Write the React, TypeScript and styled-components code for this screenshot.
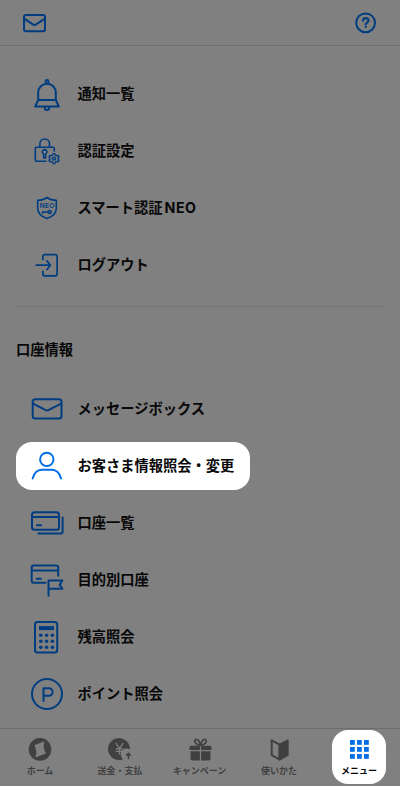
import React from "react";
import styled, { createGlobalStyle } from "styled-components";

const GlobalStyle = createGlobalStyle`
  * { box-sizing: border-box; }
  body { margin: 0; background: #808080; font-family: Inter, "Noto Sans CJK JP", sans-serif; color: #080808; }
  svg { display: block; flex: none; fill: none; stroke: currentColor; stroke-width: 2; stroke-linecap: round; stroke-linejoin: round; }
`;
const Screen = styled.div`
  width: 400px; height: 786px; display: flex; flex-direction: column; background: #808080; overflow: hidden;
`;
const Header = styled.header`
  height: 46px; flex: none; display: flex; align-items: flex-start; justify-content: space-between;
  padding: 12px 23px 0; border-bottom: 1px solid #6d6d6d; color: #003c80;
`;
const Main = styled.main`
  flex: 1; padding: 19.5px 16px 0; min-height: 0;
`;
const List = styled.ul`
  list-style: none; margin: 0; padding: 0;
`;
const Row = styled.li`
  height: 57px; display: flex; align-items: center;
`;
const Item = styled.a<{ $active?: boolean }>`
  height: 48px; display: flex; align-items: center; gap: 10.5px; padding: 0 15.5px 0 11px;
  border-radius: 16px; color: ${(p) => (p.$active ? "#006ee6" : "#003c80")};
  background: ${(p) => (p.$active ? "#fff" : "transparent")};
`;
const Label = styled.span`
  font-size: 14.25px; line-height: 20px; font-weight: 700; color: #080808; white-space: nowrap;
`;
const Latin = styled.span`
  margin-left: 2px; font-weight: 700; letter-spacing: 0.5px;
`;
const Divider = styled.hr`
  height: 1px; border: 0; background: #747474; margin: 12.5px 0 33px;
`;
const Title = styled.h2`
  margin: 0 0 20.5px; font-size: 14.25px; line-height: 20px; font-weight: 700;
`;
const Nav = styled.nav`
  height: 58px; flex: none; border-top: 1px solid #6d6d6d; display: grid; grid-template-columns: 80px 80px 79px 80px 80px;
  justify-items: center; padding-top: 1px;
`;
const Tab = styled.a<{ $active?: boolean }>`
  width: ${(p) => (p.$active ? "54px" : "80px")}; height: 54px; display: flex; flex-direction: column; align-items: center;
  padding-top: 6px; gap: 2px; border-radius: 16px; font-size: 9px; line-height: 14px; font-weight: 700; white-space: nowrap;
  color: ${(p) => (p.$active ? "#006ee6" : "#404040")};
  background: ${(p) => (p.$active ? "#fff" : "transparent")};
`;
const TabText = styled.span<{ $active?: boolean }>`
  color: ${(p) => (p.$active ? "#080808" : "inherit")};
`;

const Svg = ({ children }: { children: React.ReactNode }) => (
  <svg width="40" height="40" viewBox="0 0 40 40">{children}</svg>
);
const NavSvg = ({ children }: { children: React.ReactNode }) => (
  <svg width="26" height="26" viewBox="0 0 26 26">{children}</svg>
);

const Bell = () => (
  <Svg>
    <path d="M11.200 26v-7.500a8.800 8.800 0 0 1 17.600 0V26l3 6.500H8.200zM11.200 26h17.600" />
    <path d="M18.600 9V7.300a1.400 1.400 0 0 1 2.800 0V9M17.700 33.500a2.300 2.500 0 0 0 4.600 0" />
  </Svg>
);
const Lock = () => (
  <Svg>
    <g strokeWidth="1.600">
      <path d="M19 30.200h-8.700a2 2 0 0 1-2-2V17.300a1 1 0 0 1 1-1h16.900a1 1 0 0 1 1 1V20M12.900 16.300v-3.500a4.800 4.800 0 0 1 9.600 0v3.500" />
      <path d="M16.600 23a2.300 2.300 0 1 1 2 0v4h-2z" />
    </g>
    <g strokeWidth="1.400">
      <path d="M26.100 22.600h1.800l.5 1.500 1.200.7 1.600-.4.900 1.600-1.100 1.100v.9l1.100 1.200-.9 1.500-1.600-.3-1.200.7-.5 1.500h-1.800l-.5-1.500-1.200-.7-1.600.3-.9-1.500 1.100-1.200v-.9l-1.100-1.100.9-1.600 1.600.4 1.200-.7z" />
      <circle cx="27" cy="27.600" r="1.500" />
    </g>
  </Svg>
);
const Shield = () => (
  <Svg>
    <g strokeWidth="1.600">
      <path d="M20 9.500c2.600 1.900 5.600 2.700 9.300 2.700v8.300c0 4.700-3.600 8-9.300 10.100-5.700-2.100-9.300-5.400-9.300-10.100v-8.300c3.700 0 6.700-.8 9.300-2.700z" />
      <circle cx="22.700" cy="24" r="1.500" />
      <path d="M21 24h-5.400v1.200" />
    </g>
    <text x="20.200" y="20" textAnchor="middle" fontSize="6.700" fontWeight="600" letterSpacing=".2" fontFamily="Inter" fill="currentColor" stroke="none">NEO</text>
  </Svg>
);
const Logout = () => (
  <Svg>
    <path strokeWidth="1.700" d="M15.900 14.500v-2.900a2 2 0 0 1 2-2h10.200a2 2 0 0 1 2 2v17.200a2 2 0 0 1-2 2H17.900a2 2 0 0 1-2-2v-2.500M9.300 20.200h13.900M19.900 15.900l3.500 4.300-3.500 4.300" />
  </Svg>
);
const Message = () => (
  <Svg><rect x="5.700" y="10.200" width="28.800" height="19.300" rx="2.500" /><path d="m6 14.700 13.300 6.700q.8.400 1.600 0L34.200 14.700" /></Svg>
);
const Person = () => (
  <Svg><circle cx="19.800" cy="13.400" r="6.700" /><path d="M5.600 32.500c1.400-5 4.500-8.700 9.200-8.800h10.100c4.700.1 7.800 3.800 9.200 8.800" /></Svg>
);
const Cards = () => (
  <Svg><rect x="5" y="9.300" width="27" height="17.400" rx="2.500" /><path d="M5 14h27M10 22.200h4.200M35.600 14.500v14q0 2-2 2H11.300" /></Svg>
);
const FlagCard = () => (
  <Svg><path d="M18.500 22.700H6.700a2 2 0 0 1-2-2V7.500a2 2 0 0 1 2-2h22.500a2 2 0 0 1 2 2v8.300M5 10.500h26M9.700 18.800h4.200M21.500 35.800V20.500h13.900l-2.700 4.100 2.700 4.200H21.500" /></Svg>
);
const Calculator = () => (
  <Svg>
    <rect x="8" y="5" width="22.200" height="30.500" rx="2.500" /><rect x="12" y="9.100" width="15" height="4" fill="currentColor" stroke="none" />
    {[18.200, 24.200, 30.200].map((y) => [13.800, 19.600, 25.400].map((x) => <circle key={`${x}-${y}`} cx={x} cy={y} r="1.800" fill="currentColor" stroke="none" />))}
  </Svg>
);
const Point = () => (
  <Svg><circle cx="20" cy="20" r="15" /><path d="M16.500 27V14.200h5.300a3.800 3.800 0 0 1 0 7.600h-5.300" /></Svg>
);

const Home = () => (
  <NavSvg><circle cx="13" cy="13.400" r="11.300" fill="currentColor" stroke="none" /><path d="M7.300 9.200 17.600 5.300C16 9.500 16.500 13 18.900 17.500L8.300 21.400C10 17.200 9.500 13.200 7.300 9.200z" fill="#808080" stroke="none" /></NavSvg>
);
const Yen = () => (
  <NavSvg>
    <path d="M23 13.500A11 11 0 1 0 16.300 23.200 5.700 5.700 0 0 1 23 13.500z" fill="currentColor" stroke="none" />
    <path d="m9.200 7.500 3.300 5.200 3.300-5.200m-3.300 5.200v5.400M9.300 12.800h6.400M9.300 15.400h6.400" stroke="#808080" strokeWidth="1.300" />
    <path d="M21.500 22.500v-5.300m-2 2 2-2 2 2" strokeWidth="1.600" />
  </NavSvg>
);
const Gift = () => (
  <NavSvg>
    <path d="M4 9.700h8.900V14H2.500v-2.800A1.500 1.500 0 0 1 4 9.700zm10.100 0H23a1.500 1.500 0 0 1 1.500 1.500V14H14.100zM3.500 15.300h9.400v9.300H5.500a2 2 0 0 1-2-2zm10.600 0h9.400v7.300a2 2 0 0 1-2 2h-7.400z" fill="currentColor" stroke="none" />
    <path d="M13.400 9.500C9.800 9 7.300 6.800 7.700 4.700c.5-2.200 4.700-2.200 5.700 4.800zm.2 0c3.600-.5 6.100-2.700 5.700-4.800-.5-2.200-4.700-2.200-5.700 4.800z" strokeWidth="1.700" />
  </NavSvg>
);
const Book = () => (
  <NavSvg><path d="m5.700 4.300 7.900 4.400v14.800l-7.900-4.400z" /><path d="M13.600 8.700 21.700 4.300v14.800l-8.100 4.400z" fill="currentColor" /></NavSvg>
);
const Grid = () => (
  <NavSvg>{[4, 11, 18].map((y) => [4, 11, 18].map((x) => <rect key={`${x}-${y}`} x={x} y={y} width="4.800" height="4.800" fill="currentColor" stroke="none" />))}</NavSvg>
);

type Entry = { id: string; text: React.ReactNode; icon: React.ReactNode; active?: boolean };
const MenuList = ({ items }: { items: Entry[] }) => (
  <List>{items.map(({ id, text, icon, active }) => <Row key={id}><Item $active={active}>{icon}<Label>{text}</Label></Item></Row>)}</List>
);
const account: Entry[] = [
  { id: "notice", text: "通知一覧", icon: <Bell /> }, { id: "auth", text: "認証設定", icon: <Lock /> },
  { id: "neo", text: <>スマート認証<Latin>NEO</Latin></>, icon: <Shield /> }, { id: "logout", text: "ログアウト", icon: <Logout /> },
];
const information: Entry[] = [
  { id: "message", text: "メッセージボックス", icon: <Message /> }, { id: "customer", text: "お客さま情報照会・変更", icon: <Person />, active: true },
  { id: "accounts", text: "口座一覧", icon: <Cards /> }, { id: "goals", text: "目的別口座", icon: <FlagCard /> },
  { id: "balance", text: "残高照会", icon: <Calculator /> }, { id: "points", text: "ポイント照会", icon: <Point /> },
];
const tabs = [
  { text: "ホーム", icon: <Home /> }, { text: "送金・支払", icon: <Yen /> }, { text: "キャンペーン", icon: <Gift /> },
  { text: "使いかた", icon: <Book /> }, { text: "メニュー", icon: <Grid />, active: true },
];

export default function App() {
  return (
    <>
      <GlobalStyle />
      <Screen>
        <Header>
          <svg width="24" height="22" viewBox="0 0 24 22"><rect x="1" y="3" width="21" height="16.200" rx="2" /><path d="m1.500 6.800 9.200 6q.8.500 1.600 0l9.200-6" /></svg>
          <svg width="22" height="22" viewBox="0 0 22 22"><circle cx="10.600" cy="10.800" r="9.400" /><path d="M8.100 8.600c0-3.300 5.400-3.300 5.400 0 0 1.900-2.700 2-2.700 3.800M10.800 14.900v.1" strokeWidth="2.200" /></svg>
        </Header>
        <Main>
          <MenuList items={account} />
          <Divider />
          <Title>口座情報</Title>
          <MenuList items={information} />
        </Main>
        <Nav>{tabs.map(({ text, icon, active }) => <Tab key={text} $active={active}>{icon}<TabText $active={active}>{text}</TabText></Tab>)}</Nav>
      </Screen>
    </>
  );
}
